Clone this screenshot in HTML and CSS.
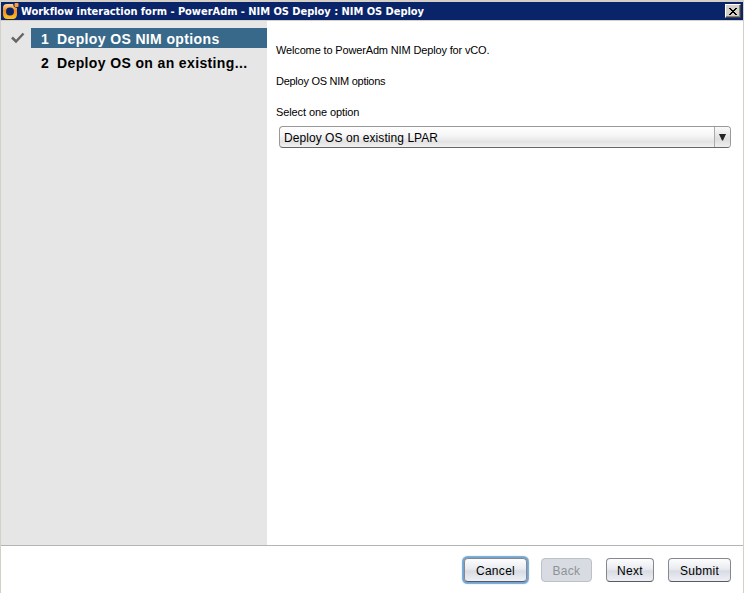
FILE: index.html
```html
<!DOCTYPE html>
<html lang="en">
<head>
<meta charset="utf-8">
<title>Workflow interaction form</title>
<link rel="stylesheet" href="styles.css">
</head>
<body>
<div class="window">
  <header class="titlebar">
    <svg class="app-icon" width="17" height="18" viewBox="0 0 17 18">
      <defs><linearGradient id="og" x1="0" y1="0" x2="0" y2="1"><stop offset="0" stop-color="#fbd5a0"/><stop offset=".45" stop-color="#f58a1f"/><stop offset="1" stop-color="#ffc21c"/></linearGradient></defs>
      <path fill="url(#og)" fill-rule="evenodd" d="M5 2H11L12 5L15 6V12Q15 17 10.500 17H5.500Q1 17 1 12V6Q1 2 5 2ZM8 5.500Q4 5.500 4 9.500T8 13.500T12 9.500T8 5.500Z"/>
      <rect x="12.500" y="1" width="4" height="4" rx="1" fill="#f7a13a"/>
    </svg>
    <h1 class="title">Workflow interaction form - PowerAdm - NIM OS Deploy : NIM OS Deploy</h1>
    <button class="close" aria-label="Close"><svg width="8" height="7" viewBox="0 0 8 7" shape-rendering="crispEdges"><path d="M0 0h2v1h1v1h2v-1h1v-1h2v1h-1v1h-1v1h-1v1h1v1h1v1h1v1h-2v-1h-1v-1h-2v1h-1v1h-2v-1h1v-1h1v-1h1v-1h-1v-1h-1v-1h-1z"/></svg></button>
  </header>
  <div class="body">
    <nav class="steps">
      <div class="step">
        <span class="mark"><svg width="14" height="12" viewBox="0 0 14 12"><path d="M1 5.500L5 9.500L12.500 1.500" fill="none" stroke="#666" stroke-width="2.500"/></svg></span>
        <span class="step-label active"><span class="num">1</span><span>Deploy OS NIM options</span></span>
      </div>
      <div class="step">
        <span class="mark"></span>
        <span class="step-label"><span class="num">2</span><span>Deploy OS on an existing...</span></span>
      </div>
    </nav>
    <main class="form">
      <p class="line welcome">Welcome to PowerAdm NIM Deploy for vCO.</p>
      <p class="line heading">Deploy OS NIM options</p>
      <p class="line prompt">Select one option</p>
      <div class="select"><span class="value">Deploy OS on existing LPAR</span><span class="arrow"><svg width="7" height="7" viewBox="0 0 7 7"><path d="M0 0H7L4 6.500H3Z" fill="#222"/></svg></span></div>
    </main>
  </div>
  <footer class="actions">
    <button class="btn cancel">Cancel</button>
    <button class="btn back" disabled>Back</button>
    <button class="btn next">Next</button>
    <button class="btn submit">Submit</button>
  </footer>
</div>
</body>
</html>
```
FILE: styles.css
```css
* { box-sizing: border-box; }
body { margin: 0; font-family: "Liberation Sans", Arial, sans-serif; color: #000; }
.window { width: 744px; height: 593px; display: flex; flex-direction: column; background: #fff; border: 1px solid #d4d0c8; border-top-width: 2px; border-bottom: 0; overflow: hidden; }
.titlebar { height: 19px; flex: none; display: flex; align-items: center; background: #0a246a; border-bottom: 1px solid #d4d0c8; padding: 0 2px 0 1px; }
.app-icon { flex: none; }
.title { margin: 0 auto 0 2px; padding-top: 1px; font: bold 11px/17px "DejaVu Sans Condensed", "DejaVu Sans", sans-serif; font-stretch: condensed; color: #fff; white-space: nowrap; letter-spacing: -0.035px; }
.close { width: 16px; height: 14px; padding: 0; border: 1px solid; border-color: #fff #404040 #404040 #fff; background: #d4d0c8; box-shadow: inset -1px -1px #808080; display: flex; align-items: center; justify-content: center; }
.body { flex: none; height: 524px; display: flex; }
.steps { width: 266px; background: #e6e6e6; padding-top: 7px; }
.step { display: flex; height: 20px; margin-bottom: 4px; }
.mark { width: 30px; padding: 4px 0 0 10px; line-height: 0; }
.step-label { flex: 1; display: flex; font-weight: bold; font-size: 14px; line-height: 23px; letter-spacing: .37px; white-space: nowrap; }
.step-label.active { background: #38698a; color: #fff; }
.num { width: 26px; padding-left: 10px; }
.form { flex: 1; padding: 21px 12px 0 9px; }
.line { margin: 0 0 15px; font-size: 11px; line-height: 16px; white-space: nowrap; }
.welcome { letter-spacing: -.15px; }
.heading { letter-spacing: -.27px; }
.prompt { letter-spacing: -.1px; }
.select { margin: -9px 0 0 3px; height: 22px; display: flex; border: 1px solid #999; border-bottom-color: #666; border-radius: 4px; background: linear-gradient(#fff, #f5f5f5 45%, #e2e2e2 75%, #f2f2f2); font-size: 12px; line-height: 22px; overflow: hidden; }
.value { flex: 1; padding-left: 4px; white-space: nowrap; letter-spacing: .06px; }
.arrow { width: 16px; border-left: 1px solid #aaa; background: linear-gradient(#fafafa, #ddd 60%, #eee); display: flex; align-items: center; justify-content: center; }
.actions { flex: 1; border-top: 1px solid #b4b4b4; display: flex; align-items: flex-start; justify-content: flex-end; gap: 14px; padding: 12px 12px 0; }
.btn { height: 24px; padding: 2px 0 0; border: 1px solid #85898f; border-bottom-color: #555a63; border-radius: 4px; background: linear-gradient(#fdfdfe, #e9ebf0 45%, #d8dbe2 55%, #eef0f6); font: 12px/20px "Liberation Sans", Arial, sans-serif; color: #000; letter-spacing: .3px; }
.cancel { width: 63px; box-shadow: 0 0 0 1px #72a5d2, 0 0 1px 1.5px #72a5d2; }
.back { width: 51px; color: #8e9297; background: #d8dbe1; border-color: #bcc0c7; }
.next { width: 48px; }
.submit { width: 63px; }
```
